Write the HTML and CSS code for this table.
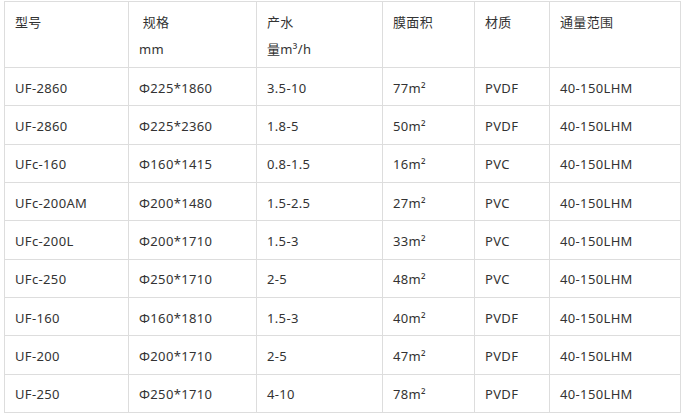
FILE: index.html
```html
<!DOCTYPE html>
<html lang="zh">
<head>
<meta charset="utf-8">
<link rel="stylesheet" href="styles.css">
</head>
<body>
<div class="spec-table">
  <div class="cell head"><p>型号</p></div>
  <div class="cell head"><p>&nbsp;规格</p><p>mm</p></div>
  <div class="cell head"><p>产水</p><p>量m³/h</p></div>
  <div class="cell head"><p>膜面积</p></div>
  <div class="cell head"><p>材质</p></div>
  <div class="cell head"><p>通量范围</p></div>

  <div class="cell">UF-2860</div><div class="cell">Φ225*1860</div><div class="cell">3.5-10</div><div class="cell">77m²</div><div class="cell">PVDF</div><div class="cell">40-150LHM</div>
  <div class="cell">UF-2860</div><div class="cell">Φ225*2360</div><div class="cell">1.8-5</div><div class="cell">50m²</div><div class="cell">PVDF</div><div class="cell">40-150LHM</div>
  <div class="cell">UFc-160</div><div class="cell">Φ160*1415</div><div class="cell">0.8-1.5</div><div class="cell">16m²</div><div class="cell">PVC</div><div class="cell">40-150LHM</div>
  <div class="cell">UFc-200AM</div><div class="cell">Φ200*1480</div><div class="cell">1.5-2.5</div><div class="cell">27m²</div><div class="cell">PVC</div><div class="cell">40-150LHM</div>
  <div class="cell">UFc-200L</div><div class="cell">Φ200*1710</div><div class="cell">1.5-3</div><div class="cell">33m²</div><div class="cell">PVC</div><div class="cell">40-150LHM</div>
  <div class="cell">UFc-250</div><div class="cell">Φ250*1710</div><div class="cell">2-5</div><div class="cell">48m²</div><div class="cell">PVC</div><div class="cell">40-150LHM</div>
  <div class="cell">UF-160</div><div class="cell">Φ160*1810</div><div class="cell">1.5-3</div><div class="cell">40m²</div><div class="cell">PVDF</div><div class="cell">40-150LHM</div>
  <div class="cell">UF-200</div><div class="cell">Φ200*1710</div><div class="cell">2-5</div><div class="cell">47m²</div><div class="cell">PVDF</div><div class="cell">40-150LHM</div>
  <div class="cell">UF-250</div><div class="cell">Φ250*1710</div><div class="cell">4-10</div><div class="cell">78m²</div><div class="cell">PVDF</div><div class="cell">40-150LHM</div>
</div>
</body>
</html>
```
FILE: styles.css
```css
html, body {
  margin: 0;
  padding: 0;
  background: #fff;
}
body {
  padding: 1px 0 0 4px;
  font-family: "Noto Sans", "Noto Sans CJK SC", sans-serif;
  font-size: 13px;
  letter-spacing: 0.35px;
  color: #333;
}
.spec-table {
  display: grid;
  width: max-content;
  grid-template-columns: 123px 127px 125px 91px 74px 130px;
  grid-template-rows: 65px;
  grid-auto-rows: 37.33px;
  gap: 1px;
  padding: 1px;
  background: #dddddd;
}
.cell {
  background: #fff;
  padding: 2px 10px 0;
  display: flex;
  align-items: center;
  line-height: 20px;
  box-sizing: border-box;
  white-space: nowrap;
}
.cell.head {
  display: block;
  padding-top: 10px;
}
.cell.head p {
  margin: 0 0 7px;
  line-height: 20px;
}
```
